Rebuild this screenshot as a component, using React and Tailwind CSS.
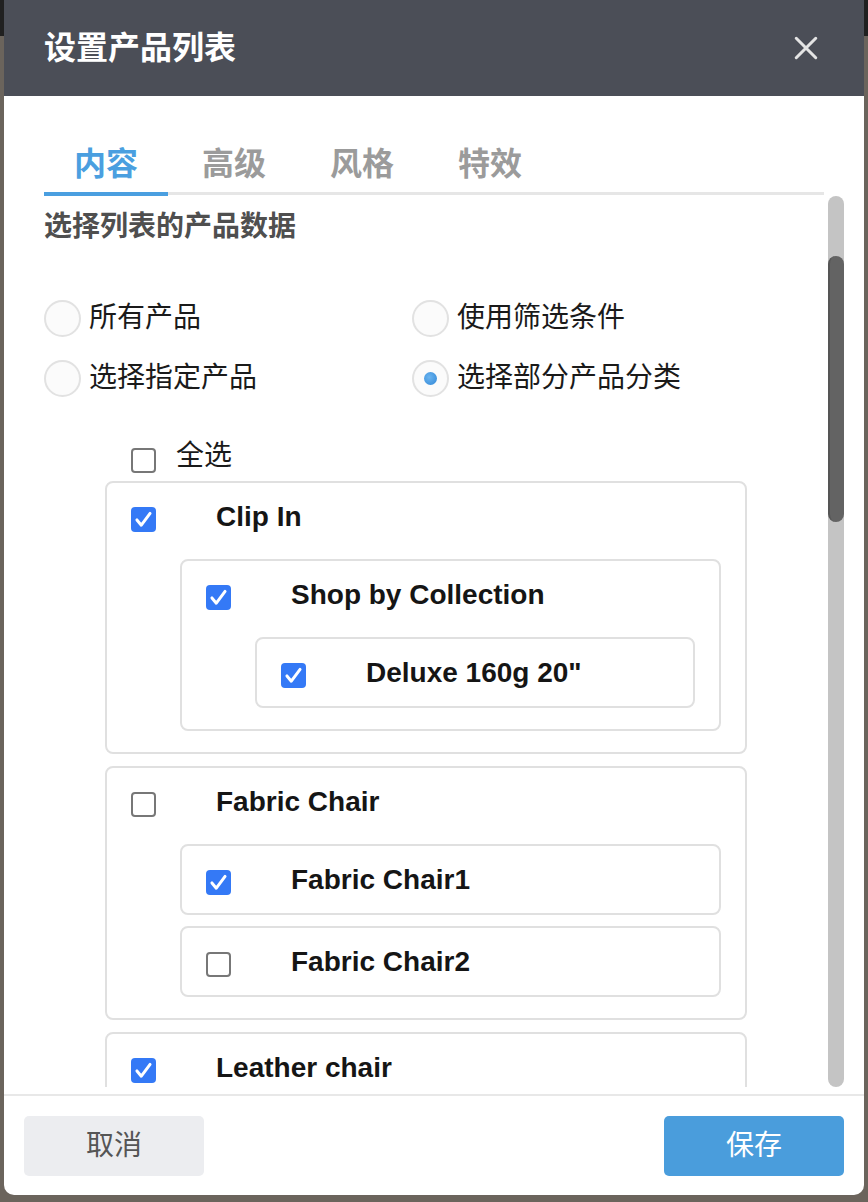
import { useState } from "react";

const FONT = "font-['Liberation_Sans','Noto_Sans_CJK_SC',sans-serif]";

const tree = [
    {
        id: "clip",
        title: "Clip In",
        checked: true,
        children: [
            {
                id: "shop",
                title: "Shop by Collection",
                checked: true,
                children: [{ id: "deluxe", title: 'Deluxe 160g 20"', checked: true }],
            },
        ],
    },
    {
        id: "fabric",
        title: "Fabric Chair",
        checked: false,
        children: [
            { id: "fc1", title: "Fabric Chair1", checked: true },
            { id: "fc2", title: "Fabric Chair2", checked: false },
        ],
    },
    { id: "leather", title: "Leather chair", checked: true },
];

function Checkbox({ checked }) {
    if (checked) {
        return (
            <span className="flex h-[25px] w-[25px] shrink-0 items-center justify-center rounded-[4px] bg-[#3479f6]">
                <svg viewBox="0 0 24 24" className="h-[21px] w-[21px]" fill="none">
                    <path d="M4.5 12.5L9.5 18.5L19.5 5" stroke="white" strokeWidth="3.4" strokeLinecap="round" strokeLinejoin="round" />
                </svg>
            </span>
        );
    }
    return <span className="block h-[25px] w-[25px] shrink-0 rounded-[4px] border-2 border-[#777] bg-white" />;
}

function Radio({ checked, label }) {
    return (
        <label className="flex h-[60px] items-center">
            <span className="flex h-[37px] w-[37px] items-center justify-center rounded-full border-2 border-[#e2e2e2] bg-[#fbfbfb]">
                {checked && (
                    <span className="block h-[13px] w-[13px] rounded-full bg-[radial-gradient(circle_at_40%_40%,#6cb5f0,#2f86d6)]" />
                )}
            </span>
            <span className="ml-[8px] text-[28px] text-[#1a1a1a]">{label}</span>
        </label>
    );
}

function Node({ node }) {
    const hasChildren = node.children?.length > 0;
    return (
        <div className="rounded-[8px] border-2 border-[#e0e0e0] bg-white">
            <div className="flex h-[67px] items-start pl-[24px]">
                <span className="mt-[24px]">
                    <Checkbox checked={node.checked} />
                </span>
                <span className="ml-[60px] mt-[14px] text-[28px] font-bold leading-[40px] text-[#151515]">{node.title}</span>
            </div>
            {hasChildren && (
                <div className="ml-[73px] mr-[24px] flex flex-col gap-[11px] pb-[21px] pt-[9px]">
                    {node.children.map(c => (
                        <Node key={c.id} node={c} />
                    ))}
                </div>
            )}
        </div>
    );
}

export default function App() {
    const [tab] = useState(0);
    const tabs = ["内容", "高级", "风格", "特效"];

    return (
        <div className={`${FONT} h-[1202px] w-[868px] overflow-hidden bg-[linear-gradient(#202020_0,#202020_36px,#6b645c_36px)] pl-[4px]`}>
            <div className="flex h-[1195px] w-[860px] flex-col overflow-hidden rounded-b-[10px] bg-white">
                {/* header */}
                <div className="flex h-[96px] shrink-0 items-center justify-between bg-[#4b4e57] pl-[40px] pr-[45px]">
                    <h2 className="text-[32px] font-bold text-white">设置产品列表</h2>
                    <svg viewBox="0 0 24 24" className="h-[26px] w-[26px]" fill="none">
                        <path d="M3 3L21 21M21 3L3 21" stroke="#e4e4e4" strokeWidth="2.8" strokeLinecap="round" />
                    </svg>
                </div>

                {/* tabs */}
                <div className="ml-[40px] mr-[40px] mt-[40px] shrink-0">
                    <div className="flex h-[56px] gap-[4px]">
                        {tabs.map((t, i) => (
                            <div
                                key={t}
                                className={`flex w-[124px] items-center justify-center text-[32px] font-bold ${i === tab ? "text-[#4a9fe0]" : "text-[#9b9b9b]"}`}
                            >
                                {t}
                            </div>
                        ))}
                    </div>
                    <div className="flex h-[4px]">
                        <div className="h-[4px] w-[124px] bg-[#4a9fe0]" />
                        <div className="h-[3px] flex-1 bg-[#e6e6e6]" />
                    </div>
                </div>

                {/* scroll area */}
                <div className="ml-[40px] mr-[20px] flex h-[891px] shrink-0 gap-[4px]">
                    <div className="flex-1 overflow-hidden">
                        <h3 className="mt-[11px] text-[28px] font-bold leading-[40px] text-[#4f4f4f]">选择列表的产品数据</h3>

                        <div className="mt-[41px] grid grid-cols-[368px_1fr]">
                            <Radio label="所有产品" />
                            <Radio label="使用筛选条件" />
                            <Radio label="选择指定产品" />
                            <Radio label="选择部分产品分类" checked />
                        </div>

                        <div className="mt-[28px] flex h-[45px] items-start pl-[87px]">
                            <span className="mt-[12px]">
                                <Checkbox checked={false} />
                            </span>
                            <span className="ml-[20px] text-[28px] leading-[40px] text-[#1a1a1a]">全选</span>
                        </div>

                        <div className="ml-[61px] mr-[77px] flex flex-col gap-[12px]">
                            {tree.map(n => (
                                <Node key={n.id} node={n} />
                            ))}
                        </div>
                    </div>

                    {/* scrollbar */}
                    <div className="flex w-[16px] flex-col rounded-full bg-[#c4c4c4]">
                        <div className="mt-[60px] h-[266px] w-[16px] rounded-full border-l-2 border-[#555] bg-[#636363]" />
                    </div>
                </div>

                {/* footer */}
                <div className="mt-[7px] flex flex-1 items-start justify-between border-t-2 border-[#e8e8e8] px-[20px] pt-[20px]">
                    <button className="flex h-[60px] w-[180px] items-center justify-center rounded-[5px] bg-[#ecedf0] text-[28px] text-[#555]">
                        取消
                    </button>
                    <button className="flex h-[60px] w-[180px] items-center justify-center rounded-[5px] bg-[#4a9ddc] text-[28px] text-white">
                        保存
                    </button>
                </div>
            </div>
        </div>
    );
}
